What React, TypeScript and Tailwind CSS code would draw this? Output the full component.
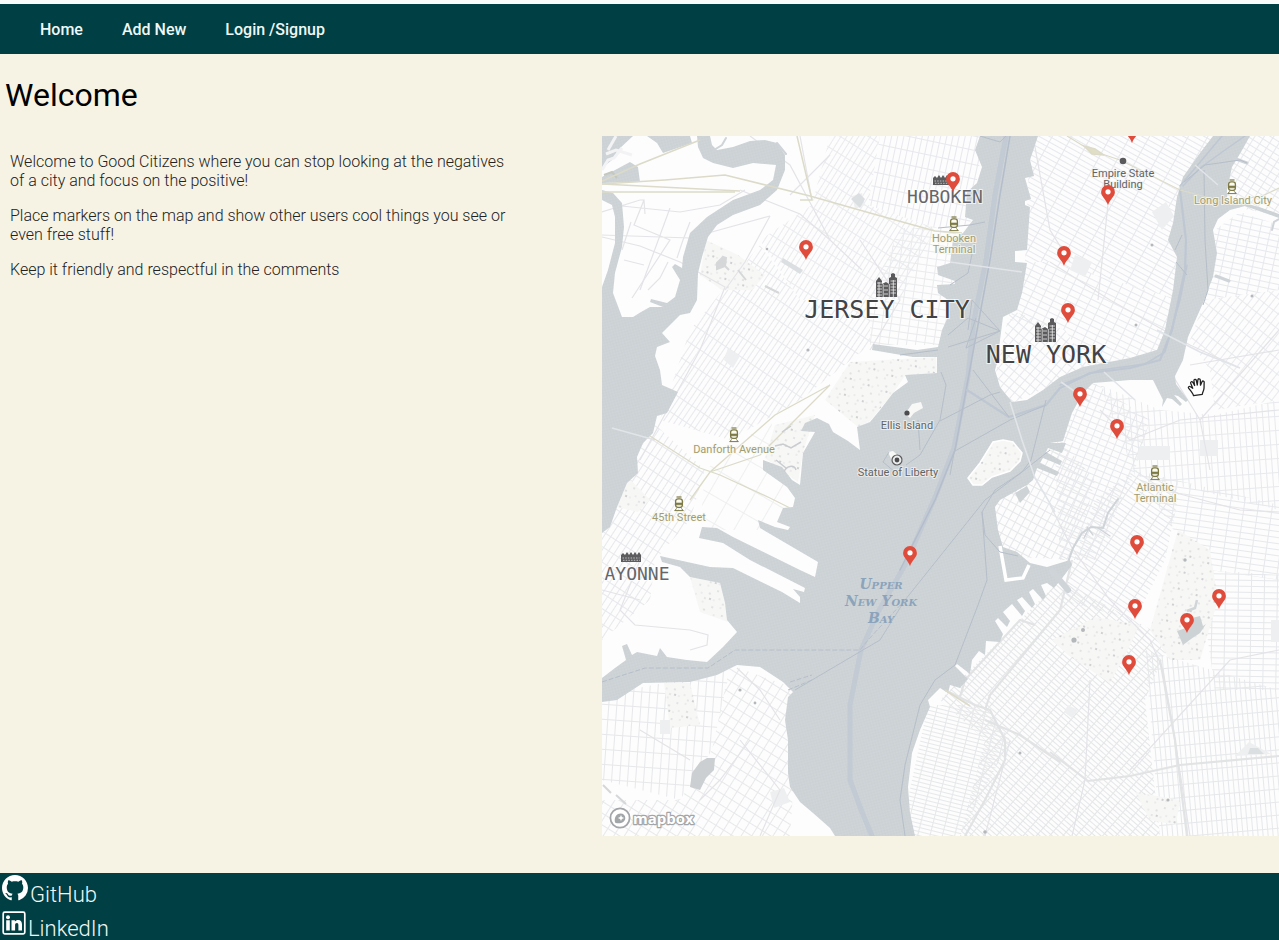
import React from "react";

const VIEW = { x: 602, y: 136, w: 677, h: 700 };

const markers: { id: string; x: number; y: number }[] = [
  { id: "Midtown", x: 1132, y: 143 },
  { id: "Hoboken", x: 953, y: 192 },
  { id: "Empire State Building", x: 1108, y: 205 },
  { id: "Journal Square", x: 806, y: 260 },
  { id: "Greenwich Village", x: 1064, y: 266 },
  { id: "Chinatown", x: 1068, y: 323 },
  { id: "Brooklyn Bridge", x: 1080, y: 407 },
  { id: "Downtown Brooklyn", x: 1117, y: 439 },
  { id: "Upper New York Bay", x: 910, y: 566 },
  { id: "Park Slope", x: 1137, y: 555 },
  { id: "Crown Heights", x: 1219, y: 609 },
  { id: "South Slope", x: 1135, y: 619 },
  { id: "Prospect Park", x: 1187, y: 633 },
  { id: "Kensington", x: 1129, y: 675 },
];

/* Street grids: spacing a x b, turned by r degrees, filling one district polygon */
const districts: { id: string; a: number; b: number; r: number; c: string; pts: string }[] = [
  { id: "midtown", a: 17, b: 5, r: 29, c: "#e2e4e9", pts: "1030,136 1220,136 1175,235 1180,300 1050,262 1025,262" },
  { id: "village", a: 11, b: 6, r: 26, c: "#e3e5e9", pts: "1025,262 1050,262 1180,300 1165,352 1090,368 1065,330 1010,320" },
  { id: "downtown", a: 7, b: 8, r: 40, c: "#e2e4e8", pts: "1010,310 1065,330 1090,368 1010,404 992,390" },
  { id: "hoboken", a: 6, b: 14, r: 12, c: "#e3e4ea", pts: "880,136 984,136 970,225 935,228 868,205" },
  { id: "heights", a: 5, b: 15, r: 32, c: "#e6e7eb", pts: "812,205 830,136 880,136 868,205 935,228 900,300 800,300 760,240" },
  { id: "jcdown", a: 9, b: 7, r: 8, c: "#e6e7ea", pts: "870,300 900,228 956,228 955,345 870,345" },
  { id: "jersey", a: 5, b: 17, r: 34, c: "#e4e5e9", pts: "760,245 800,300 870,300 870,345 800,400 730,440 660,420 690,330" },
  { id: "bayonne", a: 6, b: 13, r: 33, c: "#e3e4e8", pts: "650,420 705,470 690,520 655,560 650,600 602,640 602,530" },
  { id: "greenville", a: 20, b: 24, r: 30, c: "#eceded", pts: "705,470 770,420 800,500 770,530 700,530" },
  { id: "staten-w", a: 8, b: 15, r: 4, c: "#e2e3e6", pts: "602,695 730,670 712,750 680,800 602,780" },
  { id: "staten-e", a: 9, b: 10, r: 32, c: "#e3e4e7", pts: "730,665 800,690 790,836 602,836 602,800 680,800 712,750" },
  { id: "redhook", a: 7, b: 8, r: 28, c: "#e0e2e5", pts: "990,500 1060,440 1095,480 1075,560 1000,556" },
  { id: "heightsbk", a: 8, b: 6, r: 22, c: "#e2e4e8", pts: "1055,450 1090,380 1150,420 1135,470 1095,560 1060,560" },
  { id: "navy", a: 6, b: 14, r: -4, c: "#e4e5e9", pts: "1100,385 1160,410 1215,415 1279,400 1279,510 1135,475" },
  { id: "slope", a: 13, b: 5, r: 34, c: "#e0e2e6", pts: "1095,500 1135,470 1180,490 1165,560 1135,620 1060,600" },
  { id: "bedstuy", a: 14, b: 6, r: 8, c: "#e2e4e8", pts: "1135,470 1279,505 1279,580 1210,570 1180,540" },
  { id: "crown", a: 13, b: 6, r: 1, c: "#e1e3e6", pts: "1210,570 1279,575 1279,690 1215,690 1205,620" },
  { id: "sunset", a: 10, b: 4, r: 41, c: "#dfe1e3", pts: "1060,580 1170,640 1145,700 1160,836 960,836 985,740 940,700" },
  { id: "bayridge", a: 12, b: 4, r: 14, c: "#e1e3e5", pts: "928,705 985,705 1010,740 960,836 900,836" },
  { id: "flatbush", a: 5, b: 13, r: -5, c: "#e1e3e6", pts: "1145,650 1279,690 1279,836 1160,836" },
  { id: "wburg", a: 6, b: 12, r: 38, c: "#e5e6ea", pts: "1190,340 1205,300 1279,290 1279,400 1215,410 1210,370" },
  { id: "greenpoint", a: 10, b: 6, r: 12, c: "#e2e4e9", pts: "1215,230 1240,212 1279,225 1279,290 1205,300" },
  { id: "queens", a: 8, b: 6, r: 32, c: "#e2e4e8", pts: "1225,136 1279,136 1279,216 1225,205" },
];

const parks = [
  "706,240 738,255 765,275 752,290 722,290 700,275",
  "850,362 936,357 937,373 905,376 893,393 870,421 858,427 825,400",
  "775,425 815,415 803,452 798,482 765,458",
  "1052,640 1095,617 1140,625 1125,655 1110,683 1068,655",
  "1178,530 1210,550 1218,600 1200,660 1170,660 1150,630",
  "664,683 690,683 700,725 670,728",
  "690,577 720,583 725,603 728,622 700,612",
  "1135,792 1180,800 1176,825 1150,820",
  "627,476 650,500 638,512 617,507",
];

const bay =
  "M980 136 975 150 982 167 977 183 967 192 965 217 973 220 963 233 953 240 950 263 937 267 938 275 955 281 955 284 937 285 938 293 948 300 948 317 942 330 938 347 917 350 873 344 872 350 913 357 937 357 937 373 905 375 908 382 893 393 880 410 870 422 857 427 860 450 848 441 833 432 829 424 817 418 805 423 801 431 815 432 803 453 800 485 792 480 782 467 763 460 763 470 787 487 795 498 793 507 783 508 777 522 790 527 788 530 775 527 758 520 760 528 818 562 815 577 800 570 733 537 717 528 702 527 699 538 723 543 750 560 805 588 804 592 793 589 800 597 800 603 782 592 733 568 710 567 660 556 662 562 680 567 690 577 720 583 725 603 727 620 737 632 723 647 707 662 687 660 667 657 660 648 657 656 637 652 632 655 627 644 622 646 626 660 615 668 602 678V702L617 700 643 683 690 682 717 675 737 665 760 667 783 682 793 692 788 697 785 720 788 740 788 773 790 787 800 802 813 813 830 828 835 836H915L910 813 908 787 912 753 920 730 930 707 928 700 940 688 948 693 950 685 960 688 968 679 955 666 957 664 970 674 972 660 979 651 985 655 986 641 1000 642 1003 634 995 621 998 618 1007 627 1010 621 1003 612 1012 604 1022 616 1025 611 1017 600 1022 597 1032 608 1035 604 1029 592 1033 589 1043 600 1046 596 1041 585 1047 583 1054 588 1063 577 1072 565 1070 560 1047 567 1030 563 1017 552 1003 547 998 530 995 507 1000 500 1027 485 1033 480 1037 468 1057 476 1059 472 1040 463 1043 458 1060 465 1062 461 1046 452 1048 448 1062 453 1066 443 1050 443 1063 441 1072 413 1083 393 1093 383 1130 380 1153 380 1163 400 1162 407 1167 398 1172 399 1180 406 1182 404 1174 395 1178 396 1186 402 1188 400 1176 384 1175 376 1183 360 1188 337 1203 303 1213 277 1217 253 1213 230 1218 219 1230 210 1245 206 1262 212 1279 218 1279 214 1262 208 1245 203 1227 200 1227 190 1232 167 1241 152 1250 136H1213L1200 153 1183 177 1177 197 1173 223 1168 240 1177 257 1173 290 1165 330 1157 350 1130 358 1083 367 1060 377 1043 390 1027 400 1012 402 1000 387 995 370 997 363 1003 317 1017 310 1022 293 1027 263 1015 262 1015 251 1027 250 1030 207 1025 205 1025 201 1031 199 1025 178 1034 176 1030 160 1038 136Z";

const newarkBay =
  "M697 136H710L712 145 717 150 733 147 750 141 765 140 777 143 785 155 785 170 777 190 760 205 733 215 717 225 708 237 702 257 698 273 697 300 690 313 680 315 662 333 670 342 657 347 655 356 660 370 662 385 678 392 667 413 657 416 653 433 643 443 637 457 638 473 627 483 617 507 610 527 602 533V287L608 270 615 243 615 217 612 205 602 200V190L613 193 622 203 624 227 622 247 615 273 613 293 622 317 633 317 641 312 650 307 663 307 650 302 651 299 667 303 675 297 680 280 672 267 675 264 682 268 683 257 690 233 707 217 733 200 760 190 773 180 776 165 753 163 733 168 713 163 703 158 698 147Z";

const minorRoads = [
  "M602 212 640 200 644 200 634 225 670 240 632 298M644 200 645 214M612 205 680 212 720 205 745 190M602 235 690 238 770 216",
  "M602 237 640 246 680 262 725 287 700 350 640 460M670 208 640 290",
  "M624 260 644 265M631 222 622 250M690 222 683 240 677 258M648 290 660 278 668 262",
  "M740 190 800 214 830 240 862 270M770 216 745 262 725 290M800 136 812 200",
  "M1033 136 1050 230 1070 262M1108 204 1098 300M1050 262 1110 300 1190 345 1240 368",
  "M1157 350 1200 420 1210 470M1100 410 1130 440 1180 420 1279 410",
  "M1180 494 1240 510 1279 512M1140 480 1180 494M1050 505 1072 548 1110 600 1150 640 1163 670 1175 740 1190 836",
  "M1279 650 1230 660 1180 715 1130 770M1010 740 985 836M1090 680 1085 780 1072 836",
  "M640 560 620 610 635 625 690 630 708 635 707 645 690 650M602 590 640 600",
  "M737 668 760 690 780 720M690 760 640 730M740 740 780 790 760 836M700 800 720 780 750 740",
  "M750 136 790 165 830 240M830 155 800 185 790 195M860 240 900 300 870 350",
  "M1200 420 1279 330M1190 365 1279 350",
];

const majorRoads = [
  "M602 184 665 180 725 175 810 196 870 213 935 231 962 233",
  "M602 181 640 164 680 148 700 140M602 184 740 191",
  "M602 192 735 192M797 136 812 200 800 200",
];

const trunkRoads = [
  "M945 690 975 705 990 710 1005 740 1005 760 985 800 965 836M960 697 965 680 1020 620 1035 625M985 710 990 695 1060 610 1072 560",
  "M1050 752 1088 781 1130 776 1180 765 1279 756",
  "M1160 660 1175 740 1187 836",
  "M985 720 1020 735 1060 762",
];

function TrainIcon({ x, y }: { x: number; y: number }) {
  return (
    <g transform={`translate(${x} ${y})`} stroke="#7d7a45" fill="none">
      <path d="M-2.5-7h5" strokeWidth="1.2" />
      <rect x="-3.4" y="-5.2" width="6.8" height="8.6" rx="2.4" fill="#fbfaf0" strokeWidth="1.3" />
      <path d="M-3-1h6v1.8h-6z" fill="#7d7a45" strokeWidth=".6" />
      <path d="M-4.5 6.6h9M-2.5 4.4-4 6.6M2.5 4.4 4 6.6" strokeWidth="1" />
    </g>
  );
}

function TowersIcon({ x, y }: { x: number; y: number }) {
  return (
    <g transform={`translate(${x} ${y})`}>
      <path d="M0 24V8l3-4 3 4v3l4-2 3 2V5l2-1V1l2-1 2 1v3l2 1v19z" fill="#5a5a5c" />
      <path d="M1 10h5M1 13h5M1 16h5M1 19h5M1 22h5M14.5 8h5.5M14.5 11h5.5M14.5 14h5.5M14.5 17h5.5M14.5 20h5.5M8 13h4M8 17h4M8 21h4" stroke="#e8e8ea" strokeWidth=".8" />
      <path d="M7.2 11v13M13.3 11v13M3 9v15M17.3 7v17" stroke="#fff" strokeWidth=".7" />
    </g>
  );
}

function TownIcon({ x, y }: { x: number; y: number }) {
  return (
    <g transform={`translate(${x} ${y})`}>
      <path d="M0 11V4l2-2 2 2 2-3 2 3 2-3 2 3 2-3 2 3 2-3 2 3v7z" fill="#5c5c5e" />
      <path d="M1.5 7h17M2 9.3h17" stroke="#d8d8da" strokeWidth=".8" strokeDasharray="1.5 1.2" />
    </g>
  );
}

function MapDrawing() {
  return (
    <svg
      viewBox={`${VIEW.x} ${VIEW.y} ${VIEW.w} ${VIEW.h}`}
      className="block h-full w-full"
      role="img"
      aria-label="Map of New York and Jersey City"
    >
      <defs>
        {districts.map((d) => (
          <pattern
            key={d.id}
            id={`grid-${d.id}`}
            width={d.a}
            height={d.b}
            patternUnits="userSpaceOnUse"
            patternTransform={`rotate(${d.r})`}
          >
            <path d={`M0 .5H${d.a}M.5 0V${d.b}`} stroke={d.c} strokeWidth="1" />
          </pattern>
        ))}
        <pattern id="park" width="19" height="17" patternUnits="userSpaceOnUse" patternTransform="rotate(20)">
          <rect width="19" height="17" fill="#f7f7f6" />
          <g fill="#dcdddd">
            <circle cx="3" cy="4" r="1" />
            <circle cx="11" cy="2" r=".8" />
            <circle cx="15" cy="9" r="1.1" />
            <circle cx="7" cy="11" r=".8" />
            <circle cx="2" cy="14" r=".7" />
            <circle cx="12" cy="15" r=".9" />
          </g>
          <circle cx="17" cy="14" r=".9" fill="#bcbec0" />
        </pattern>
        <pattern id="water" width="4" height="4" patternUnits="userSpaceOnUse" patternTransform="rotate(30)">
          <rect width="4" height="4" fill="#cfd5d7" />
          <path d="M0 1h2M2 3h2" stroke="#c8ced2" strokeWidth="1" />
        </pattern>
      </defs>

      <rect x="602" y="136" width="677" height="700" fill="#fdfdfd" />
      <g opacity=".8">
        {districts.map((d) => (
          <polygon key={d.id} points={d.pts} fill={`url(#grid-${d.id})`} />
        ))}
      </g>
      {parks.map((p) => (
        <polygon key={p} points={p} fill="url(#park)" />
      ))}

      <g fill="#eeeff0">
        <path d="M1075 255 1092 262 1085 277 1070 270ZM1140 446h30v14h-34zM1200 440h18v16h-18zM1152 212l14-10 8 14-12 14z" />
        <path d="M728 348 740 356 733 368 724 360ZM852 196l10-3 3 12-10 4zM660 720h10v14h-10zM770 792l14-4 6 14-16 6z" />
        <path d="M1271 620h8v22h-8zM1235 756l14-14 22 12zM1068 705l10 5-6 8-8-6z" />
      </g>
      <g fill="#dcdfe1">
        <path d="M783 258 803 270 800 274 781 262ZM851 199l8-6 6 6-5 9z" />
        <path d="M1250 748h8l6 6h-16z" />
      </g>

      <g fill="none" stroke="#e4e4e8" strokeWidth="1.2">
        {minorRoads.map((d) => (
          <path key={d} d={d} />
        ))}
      </g>
      <g fill="none" stroke="#e2e3e4" strokeWidth="2.2" strokeLinejoin="round">
        {trunkRoads.map((d) => (
          <path key={d} d={d} />
        ))}
      </g>

      {/* Water */}
      <g fill="url(#water)">
        <path d={bay} />
        <path d={newarkBay} />
        <path d="M602 136H633L618 150 612 160 602 168ZM602 177 630 162 638 167 640 182 602 183ZM647 136H690L692 143 663 153 657 143Z" />
        <path d="M700 762 707 758 715 758 714 770 706 778 700 790 690 787 692 773Z" fill="#cbcfd1" />
        <path d="M1177 631 1186 628 1192 618 1200 616 1203 626 1206 624 1200 633 1191 639 1183 645Z" fill="#cdd3d5" />
        <path d="M1187 611 1195 608 1197 600" fill="none" stroke="#d0d5d8" strokeWidth="2.5" />
      </g>
      <g fill="none" stroke="#cfd4d8" strokeLinecap="round">
        <path d="M1066 568 1073 548 1082 533 1091 527 1103 528 1108 513 1118 499" strokeWidth="2" />
        <path d="M1087 527 1093 535M1098 528 1110 536M1088 530 1084 538" strokeWidth="1.3" />
        <path d="M1052 571 1068 590" strokeWidth="6" />
        <path d="M1216 276 1229 281M1233 158 1247 163" strokeWidth="3" />
        <path d="M1272 230 1274 222 1279 219" strokeWidth="2" />
        <path d="M777 143 786 154M714 150 722 145 726 138" strokeWidth="2" />
      </g>

      {/* Islands and breakwaters */}
      <path d="M973 485 968 478 980 463 993 442 1003 440 1013 442 1022 453 1020 461 1010 471 992 477 982 485Z" fill="url(#park)" stroke="#fff" strokeWidth="1.5" />
      <path d="M905 414 912 404 921 402 923 408 914 413 910 418ZM888 452 893 451 903 460 899 466 892 461Z" fill="#f8f8f6" />
      <path d="M1000 546 1006 580 1023 578 1029 565" fill="none" stroke="#fff" strokeWidth="3.5" />
      <path d="M1015 493 1027 486 1030 492 1020 503Z" fill="#ced3d6" />
      <path d="M602 170 608 160 614 158 622 148M606 154 616 150 632 155M616 136 608 150" fill="none" stroke="#f3f3f5" strokeWidth="3" />
      <path d="M604 175 612 172 617 178" fill="none" stroke="#c4c8bf" strokeWidth="2" />

      {/* Shipping lanes and ferry routes */}
      <g fill="none" stroke="#bfc7d3" strokeLinejoin="round" strokeLinecap="round">
        <path d="M1006 136 995 195 986 260 974 320 968 376 954 448 936 495 905 565 878 612 861 650 850 705 850 780 862 812 872 836" strokeWidth="5" opacity=".75" />
        <path d="M1010 136 1000 195 990 260 978 325 967 385 955 450 935 500 900 570" strokeWidth="1.5" stroke="#b4bdcb" />
        <path d="M967 390 1009 417 1046 405 1060 388 1090 373 1130 368 1160 360 1172 330 1185 270 1186 240 1180 190" strokeWidth="2.2" />
        <path d="M1060 385 1100 370 1145 364 1165 352 1180 300 1187 265M1183 186 1200 168 1225 150 1245 136M1180 186 1222 136" strokeWidth="1.5" />
      </g>
      <g fill="none" stroke="#b6bec9" strokeWidth="1">
        <path d="M948 335 968 318 1000 331 966 348 976 318M968 330 972 300 1000 331M948 347 1000 331M938 350 900 355" />
        <path d="M940 421 990 395 1000 392M955 451 1010 420 1046 405M973 370 1009 417M1046 400 1031 460 1022 472 985 500 905 600 880 640 795 690" />
        <path d="M1022 472 995 490 982 512 985 535 1000 552 1018 556M982 512 987 580 978 605 955 665 935 680 920 705 905 765 900 800 905 836" />
        <path d="M941 372 946 385 940 420 920 455 906 465M918 420 920 450M889 452 883 462 895 472M938 228 970 225 985 222M950 285 968 273 975 240" />
        <path d="M602 682 645 668 708 668 735 650 860 650 868 640 905 600M790 682 812 675M788 690 812 680" strokeDasharray="5 2" />
        <path d="M1204 170 1205 240 1208 290 1203 305M1175 250 1182 235M1184 182 1205 165 1240 160 1247 163M1176 262 1187 275" />
        <path d="M950 475 955 448M1022 472 1050 450M980 136 1000 142 1006 136" />
      </g>
      <g fill="none" stroke="#e1e4e8" strokeWidth="1.6">
        <path d="M1010 402 1022 440 1035 478 1055 512M950 262 1022 272M1061 382 1090 402M1104 372 1135 400M1157 330 1200 352 1240 368M1195 165 1218 185M612 428 655 440" />
      </g>

      <g fill="none" stroke="#dcdbc9" strokeWidth="1.5">
        {majorRoads.map((d) => (
          <path key={d} d={d} />
        ))}
        <path d="M650 436 700 468 720 475 770 498 790 508M830 385 775 415 710 472 690 500M710 472 760 455 830 385" strokeWidth="1.3" />
        <path d="M1067 136 1090 150 1120 160 1180 190 1225 202 1262 196 1279 188" strokeWidth="1.2" />
        <path d="M1084 146 1095 149 1104 155 1092 154Z" fill="#e0dfc6" />
        <path d="M945 690 970 706" />
      </g>

      <g fill="#b5b8ba">
        <circle cx="767" cy="249" r="1.3" />
        <circle cx="808" cy="350" r="1.6" />
        <circle cx="1152" cy="245" r="1.5" />
        <circle cx="1136" cy="325" r="1.5" />
        <circle cx="1252" cy="296" r="1.5" />
        <circle cx="1185" cy="560" r="1.7" />
        <circle cx="1074" cy="640" r="2.6" />
        <circle cx="1083" cy="630" r="2" />
        <circle cx="1168" cy="800" r="1.6" />
        <circle cx="985" cy="832" r="1.8" />
        <circle cx="1020" cy="753" r="1.5" />
        <circle cx="740" cy="690" r="1.6" />
        <circle cx="755" cy="703" r="1.4" />
      </g>
      <path d="M717 263l6-6 3 1-1 8-8 3zM725 266l4 4M738 270l8 10M765 286l14 7M603 785l8 8M616 795l10 9" fill="#d5d7d8" stroke="#d5d7d8" strokeWidth="2" />
      <path d="M775 446l8-2 8 4 10-6M782 432l9-6M784 472c2-6 10-8 12-2M776 460l10 8" fill="none" stroke="#c9cdd0" strokeWidth="1.5" />

      {/* Place symbols */}
      <TownIcon x={933} y={174} />
      <TownIcon x={621} y={551} />
      <TowersIcon x={876} y={273} />
      <TowersIcon x={1035} y={318} />
      <TrainIcon x={954} y={224} />
      <TrainIcon x={1232} y={187} />
      <TrainIcon x={734} y={435} />
      <TrainIcon x={679} y={504} />
      <TrainIcon x={1155} y={473} />
      <circle cx="1123" cy="161" r="3.3" fill="#5a5a5c" />
      <circle cx="907" cy="413" r="2.6" fill="#4c4c4e" />
      <circle cx="897" cy="460" r="5" fill="#e9ebec" stroke="#5a5a5c" strokeWidth="1.2" />
      <circle cx="897" cy="460" r="2.4" fill="#4c4c4e" />

      {/* City names */}
      <g textAnchor="middle" className="fill-[#434345] font-['DejaVu_Sans_Mono',monospace] [paint-order:stroke]" stroke="#fff" strokeOpacity=".7" strokeWidth="2">
        <text x="887" y="318" className="text-[25px]">JERSEY CITY</text>
        <text x="1046" y="363" className="text-[25px]">NEW YORK</text>
        <text x="945" y="203" className="fill-[#66666a] text-[18px]">HOBOKEN</text>
        <text x="637" y="580" className="fill-[#66666a] text-[18px]">AYONNE</text>
      </g>

      {/* Stations */}
      <g textAnchor="middle" className="fill-[#a09d75] font-[Roboto,sans-serif] text-[11px] [paint-order:stroke]" stroke="#fbfaf0" strokeOpacity=".75" strokeWidth="2">
        <text x="954" y="242">Hoboken</text>
        <text x="954" y="253">Terminal</text>
        <text x="1233" y="204">Long Island City</text>
        <text x="734" y="453">Danforth Avenue</text>
        <text x="679" y="521">45th Street</text>
        <text x="1155" y="491">Atlantic</text>
        <text x="1155" y="502">Terminal</text>
      </g>

      {/* Landmarks */}
      <g textAnchor="middle" className="fill-[#626466] font-[Roboto,sans-serif] text-[11px] [paint-order:stroke]" stroke="#f4f5f5" strokeOpacity=".7" strokeWidth="2">
        <text x="1123" y="177">Empire State</text>
        <text x="1123" y="188">Building</text>
        <text x="907" y="429">Ellis Island</text>
        <text x="898" y="476">Statue of Liberty</text>
      </g>

      <g textAnchor="middle" className="fill-[#8ba3bb] font-['DejaVu_Serif',serif] text-[14px] font-bold italic [font-variant-caps:small-caps]">
        <text x="881" y="589">Upper</text>
        <text x="881" y="606">New York</text>
        <text x="881" y="623">Bay</text>
      </g>

      {/* Attribution logo */}
      <circle cx="620" cy="818" r="9.6" fill="#fff" stroke="#a3a6a9" strokeWidth="1.8" />
      <path d="M615.2 822.8c-1.500-4.600.7-9.400 5.500-9.400a4.600 4.600 0 0 1 4.600 4.600c0 4.200-5.100 6.400-10.100 4.800z" fill="#a3a6a9" />
      <path d="m621 814.900.9 2.200 2.200.9-2.200.9-.9 2.200-.9-2.200-2.200-.9 2.200-.9z" fill="#fff" />
      <text x="633" y="824" className="fill-white font-['Open_Sans',sans-serif] text-[15px] font-bold [paint-order:stroke]" stroke="#a3a6a9" strokeWidth="2.5" strokeLinejoin="round">
        mapbox
      </text>
    </svg>
  );
}

function Pin() {
  return (
    <svg viewBox="0 0 14 20" className="block h-5 w-3.5" aria-hidden="true">
      <path d="M7 0a6.9 6.9 0 0 0-6.9 6.9C.1 11.5 5 14 7 20c2-6 6.9-8.5 6.9-13.1A6.9 6.9 0 0 0 7 0z" fill="#e04c3c" />
      <circle cx="7" cy="6.8" r="2.6" fill="#fff" />
    </svg>
  );
}

function GrabHand() {
  return (
    <svg viewBox="0 0 20 20" className="block h-5 w-5" aria-hidden="true">
      <path
        d="M6.5 18.6C6 16.2 3.5 13.5 1.6 11.2.8 10 2.2 8.8 3.5 9.8l2.200 1.500L3.700 6.200C3.200 4.800 5 4 5.800 5.300L7.600 8.500 6.900 3.700c-.2-1.500 1.900-1.900 2.400-.4l1 4.700.6-5.200c.2-1.500 2.300-1.300 2.400.2l.2 5.200 1.500-3.400c.6-1.300 2.400-.8 2.200.6-.3 2.400.1 4-.3 6.600-.3 2-1.500 3.300-1.600 5.300z"
        fill="#fff"
        stroke="#222"
        strokeWidth="1.3"
        strokeLinejoin="round"
      />
    </svg>
  );
}

function GitHubIcon() {
  return (
    <svg viewBox="0 0 16 16" className="block h-[26px] w-[26px] fill-white" aria-hidden="true">
      <path d="M8 0C3.58 0 0 3.58 0 8c0 3.54 2.29 6.53 5.47 7.59.4.07.55-.17.55-.38 0-.19-.01-.82-.01-1.49-2.01.37-2.53-.49-2.69-.94-.09-.23-.48-.94-.82-1.13-.28-.15-.68-.52-.01-.53.63-.01 1.08.58 1.23.82.72 1.21 1.87.87 2.33.66.07-.52.28-.87.51-1.07-1.78-.2-3.64-.89-3.64-3.95 0-.87.31-1.59.82-2.15-.08-.2-.36-1.02.08-2.12 0 0 .67-.21 2.2.82.64-.18 1.32-.27 2-.27.68 0 1.36.09 2 .27 1.53-1.04 2.2-.82 2.2-.82.44 1.1.16 1.92.08 2.12.51.56.82 1.27.82 2.15 0 3.07-1.87 3.75-3.65 3.95.29.25.54.73.54 1.48 0 1.07-.01 1.93-.01 2.2 0 .21.15.46.55.38A8.013 8.013 0 0016 8c0-4.42-3.58-8-8-8z" />
    </svg>
  );
}

function LinkedInIcon() {
  return (
    <svg viewBox="0 0 24 24" className="block h-6 w-6" aria-hidden="true">
      <rect x="1.2" y="1.2" width="21.6" height="21.6" rx="1.5" fill="none" stroke="#fff" strokeWidth="1.7" />
      <circle cx="6" cy="6.2" r="2" fill="#fff" />
      <path d="M4.2 9.3h3.6v10.2H4.2zM9.5 9.3h3.4v1.3c.7-1 1.800-1.600 3.200-1.600 2.800 0 3.900 1.700 3.900 4.600v5.900h-3.600v-5.300c0-1.400-.4-2.300-1.500-2.300-1.200 0-1.800.9-1.800 2.300v5.300H9.500z" fill="#fff" />
    </svg>
  );
}

const place = (x: number, y: number) => ({
  left: `${((x - VIEW.x) / VIEW.w) * 100}%`,
  top: `${((y - VIEW.y) / VIEW.h) * 100}%`,
});

export default function App() {
  return (
    <div className="flex min-h-screen flex-col bg-[#f7f3e4] font-[Roboto,sans-serif] text-black">
      <header className="border-t-4 border-[#f8fbfa] bg-[#003f43]">
        <nav className="flex items-center gap-[39px] px-10 pt-3.5 pb-3 text-base font-medium text-[#eef8f7]">
          <a href="#home">Home</a>
          <a href="#new">Add New</a>
          <a href="#login">Login /Signup</a>
        </nav>
      </header>

      <main className="grow pt-[21px] pb-[37px]">
        <h1 className="mb-[21px] px-[5px] text-[32px] leading-10 font-normal">Welcome</h1>
        <div className="grid grid-cols-[602fr_677fr] items-start">
          <section className="flex max-w-lg flex-col gap-4 pt-4 pl-2.5 text-base leading-[19px] font-light text-[#222]">
            <p>
              Welcome to Good Citizens where you can stop looking at the negatives of a city and focus on the
              positive!
            </p>
            <p>Place markers on the map and show other users cool things you see or even free stuff!</p>
            <p>Keep it friendly and respectful in the comments</p>
          </section>

          <section aria-label="Map" className="relative aspect-[677/700] overflow-hidden">
            <MapDrawing />
            {markers.map((m) => (
              <button
                key={m.id}
                type="button"
                aria-label={m.id}
                className="absolute -translate-x-1/2 -translate-y-full"
                style={place(m.x, m.y)}
              >
                <Pin />
              </button>
            ))}
            <div className="pointer-events-none absolute -translate-x-1/2 -translate-y-1/2" style={place(1197, 387)}>
              <GrabHand />
            </div>
          </section>
        </div>
      </main>

      <footer className="flex flex-col items-start bg-[#003f43] text-[22px] leading-[25px] font-light text-[#eef8f7]">
        <a href="#github" className="flex items-start gap-0.5 pl-0.5">
          <span className="pt-0.5">
            <GitHubIcon />
          </span>
          <span className="pt-[9px]">GitHub</span>
        </a>
        <a href="#linkedin" className="flex items-start gap-0.5 pl-0.5">
          <span className="pt-1">
            <LinkedInIcon />
          </span>
          <span className="pt-[9px] -mb-px">LinkedIn</span>
        </a>
      </footer>
    </div>
  );
}
